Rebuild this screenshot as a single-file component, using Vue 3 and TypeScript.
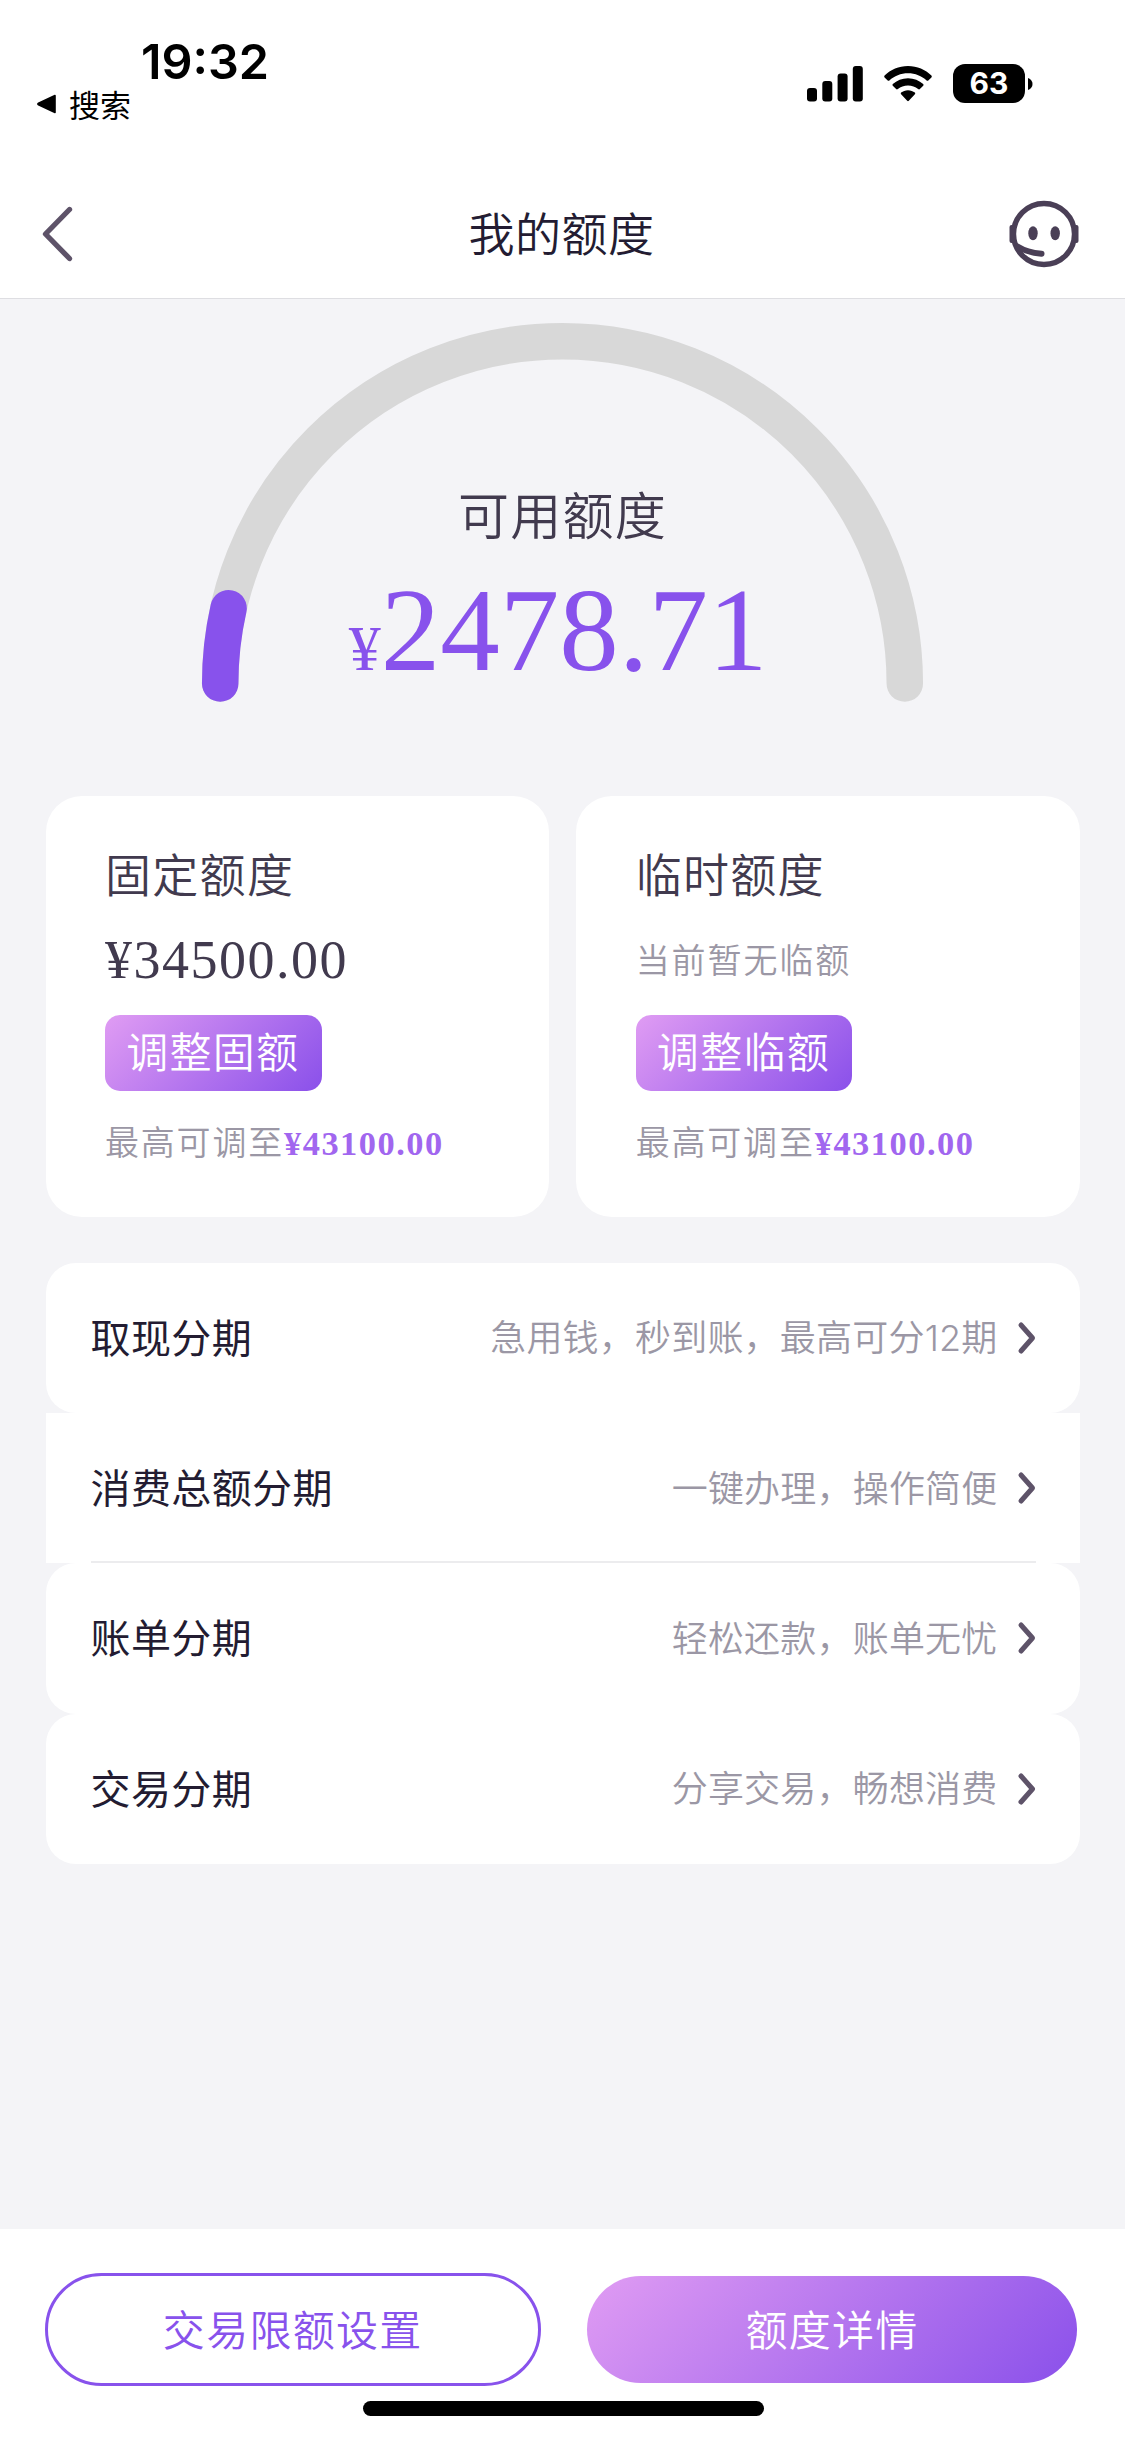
<script setup lang="ts">
interface QuotaCard {
  title: string
  amount?: string
  empty?: string
  action: string
  max: string
}

interface InstallmentRow {
  label: string
  hint: string
  digits?: string
  tail?: string
  square?: boolean
}

const cards: QuotaCard[] = [
  { title: '固定额度', amount: '¥34500.00', action: '调整固额', max: '¥43100.00' },
  { title: '临时额度', empty: '当前暂无临额', action: '调整临额', max: '¥43100.00' },
]

const rows: InstallmentRow[] = [
  { label: '取现分期', hint: '急用钱，秒到账，最高可分', digits: '12', tail: '期' },
  { label: '消费总额分期', hint: '一键办理，操作简便', square: true },
  { label: '账单分期', hint: '轻松还款，账单无忧' },
  { label: '交易分期', hint: '分享交易，畅想消费' },
]

// Half-circle gauge: centre and radius in svg units, progress as an angle from the left end.
const cx = 562.5
const cy = 385.5
const r = 342.3
const angle = (12.7 * Math.PI) / 180
const track = `M${cx - r} ${cy}A${r} ${r} 0 0 1 ${cx + r} ${cy}`
const progress = `M${cx - r} ${cy}A${r} ${r} 0 0 1 ${cx - r * Math.cos(angle)} ${cy - r * Math.sin(angle)}`
</script>

<template>
  <div class="screen">
    <header class="top">
      <div class="status">
        <div class="status-left">
          <div class="time">19:32</div>
          <div class="back-app">
            <svg width="20" height="20" viewBox="0 0 20 20">
              <path d="M19 1.5V18.5L2.500 10.8Q1.200 10 2.500 9.2Z" stroke="#000" stroke-width="1.6" stroke-linejoin="round" />
            </svg>
            <span>搜索</span>
          </div>
        </div>
        <div class="status-icons">
          <svg class="signal" width="56" height="36" viewBox="0 0 56 36">
            <rect x="0" y="22" width="10" height="13.5" rx="3" />
            <rect x="15.3" y="15" width="10" height="20.5" rx="3" />
            <rect x="30.6" y="7.5" width="10" height="28" rx="3" />
            <rect x="45.8" y="0" width="10" height="35.5" rx="3" />
          </svg>
          <svg class="wifi" width="48" height="36" viewBox="0 0 48 36">
            <path d="M24 0C33.2 0 41.5 3.7 47.4 9.6Q48.2 10.5 47.4 11.4L44.3 14.5Q43.5 15.2 42.6 14.5C37.700 10 31.200 7.300 24 7.300S10.300 10 5.400 14.500Q4.500 15.200 3.700 14.500L.6 11.400Q-.2 10.500 .6 9.600C6.500 3.700 14.800 0 24 0Z" />
            <path d="M24 12.200C29.900 12.200 35.200 14.400 39.200 18Q40 18.900 39.200 19.800L35.900 23Q35.100 23.800 34.100 23C31.400 20.700 27.900 19.500 24 19.500S16.600 20.700 13.900 23Q12.900 23.800 12.100 23L8.800 19.800Q8 18.900 8.800 18C12.800 14.400 18.100 12.200 24 12.200Z" />
            <path d="M24 24.200C26.700 24.200 29 25.100 30.900 26.600Q31.700 27.400 30.900 28.200L24.800 34.800Q24 35.600 23.200 34.800L17.100 28.200Q16.300 27.400 17.100 26.600C19 25.100 21.300 24.200 24 24.200Z" />
          </svg>
          <div class="battery">63</div>
          <svg class="nub" width="5" height="12" viewBox="0 0 5 12">
            <path d="M0 0Q4.500 1.800 4.500 6T0 12Z" />
          </svg>
        </div>
      </div>
      <nav class="nav">
        <svg class="nav-back" width="34" height="58" viewBox="0 0 34 58">
          <path d="M28.500 4.500L4.500 29L28.500 53.500" fill="none" stroke="#5e5369" stroke-width="5.300" stroke-linecap="round" stroke-linejoin="round" />
        </svg>
        <h1>我的额度</h1>
        <svg class="service" width="72" height="72" viewBox="0 0 72 72">
          <circle cx="36" cy="36" r="30.500" fill="none" stroke="#4a3f56" stroke-width="5.400" />
          <path d="M6.500 27H3.500Q1.500 27 1.500 29V43Q1.500 45 3.500 45H6.500ZM65.500 27H68.500Q70.500 27 70.500 29V43Q70.500 45 68.500 45H65.500Z" fill="#4a3f56" />
          <ellipse cx="25" cy="35.300" rx="4.700" ry="7" fill="#4a3f56" />
          <ellipse cx="47.200" cy="35.300" rx="4.700" ry="7" fill="#4a3f56" />
          <path d="M9.500 48.500Q19 54.500 33.500 55.700" fill="none" stroke="#4a3f56" stroke-width="6" stroke-linecap="round" />
        </svg>
      </nav>
    </header>

    <main>
      <section class="gauge">
        <svg class="gauge-arc" width="1125" height="420" viewBox="0 0 1125 420" fill="none" stroke-width="36.500" stroke-linecap="round">
          <path :d="track" stroke="#d8d8d8" />
          <path :d="progress" stroke="#8852ec" />
        </svg>
        <div class="gauge-label">可用额度</div>
        <div class="gauge-amount"><small>¥</small>2478.71</div>
      </section>

      <section class="cards">
        <article v-for="card in cards" :key="card.title" class="card">
          <h2>{{ card.title }}</h2>
          <p v-if="card.amount" class="amount">{{ card.amount }}</p>
          <p v-else class="empty">{{ card.empty }}</p>
          <button class="adjust">{{ card.action }}</button>
          <p class="max">最高可调至<b>{{ card.max }}</b></p>
        </article>
      </section>

      <section class="list">
        <div v-for="row in rows" :key="row.label" class="row" :class="{ square: row.square }">
          <div class="row-inner">
            <span class="label">{{ row.label }}</span>
            <span class="hint">{{ row.hint }}<span v-if="row.digits" class="digits">{{ row.digits }}</span>{{ row.tail }}</span>
            <svg class="go" width="20" height="34" viewBox="0 0 20 34">
              <path d="M4 4L15.500 17L4 30" fill="none" stroke="#5e5369" stroke-width="5" stroke-linecap="round" stroke-linejoin="round" />
            </svg>
          </div>
        </div>
      </section>
    </main>

    <footer class="bottom">
      <div class="actions">
        <button class="outline">交易限额设置</button>
        <button class="filled">额度详情</button>
      </div>
      <div class="home"></div>
    </footer>
  </div>
</template>

<style>
body {
  margin: 0;
}
</style>

<style scoped>
.screen {
  display: flex;
  flex-direction: column;
  width: 1125px;
  height: 2439px;
  overflow: hidden;
  background: #f4f4f7;
  color: #413a4e;
  font-family: "Noto Sans CJK SC", sans-serif;
  font-weight: 350;
}
h1, h2, p {
  margin: 0;
  font-weight: inherit;
}
button {
  display: flex;
  align-items: center;
  justify-content: center;
  box-sizing: border-box;
  margin: 0;
  border: 0;
  font: inherit;
  font-size: 42px;
  letter-spacing: 1.3px;
}
svg {
  display: block;
  flex: none;
}
.top {
  box-sizing: border-box;
  height: 299px;
  background: #fff;
  border-bottom: 1.500px solid #dedee2;
}
.status {
  display: flex;
  justify-content: space-between;
  height: 170px;
  color: #000;
}
.status-left {
  padding: 37px 0 0 36px;
}
.time {
  padding-left: 105px;
  font: 600 48.500px/50px Inter, sans-serif;
}
.back-app {
  display: flex;
  align-items: center;
  gap: 13px;
  font-size: 31px;
  line-height: 34px;
  font-weight: 400;
}
.status-icons {
  display: flex;
  align-items: flex-start;
  padding: 64px 92px 0 0;
}
.signal {
  margin-top: 2px;
}
.wifi {
  margin: 2px 21px 0;
}
.battery {
  width: 72px;
  height: 39px;
  border-radius: 12px;
  background: #000;
  color: #fff;
  font: 700 30px/39px Inter, sans-serif;
  text-align: center;
}
.nub {
  margin: 14px 0 0 3px;
}
.nav {
  display: flex;
  align-items: center;
  justify-content: space-between;
  height: 128px;
  padding: 0 45px 0 41px;
}
.nav h1 {
  color: #231c32;
  font-size: 46px;
  line-height: 60px;
  letter-spacing: .500px;
  margin: 0 0 7px 40px;
}
.gauge {
  position: relative;
  box-sizing: border-box;
  height: 496.500px;
  padding-top: 179px;
  text-align: center;
}
.gauge-arc {
  position: absolute;
  left: 0;
  top: -1px;
}
.gauge-label {
  position: relative;
  font-size: 51px;
  line-height: 70px;
  letter-spacing: 1.300px;
}
.gauge-amount {
  position: relative;
  margin-top: 17px;
  padding-right: 9px;
  color: #8852ec;
  font: 400 119px/130px "Liberation Serif", serif;
}
.gauge-amount small {
  font-size: 64px;
}
.cards {
  display: flex;
  justify-content: space-between;
  padding: 0 45px 0 45.500px;
}
.card {
  box-sizing: border-box;
  width: 503.800px;
  height: 421.500px;
  padding: 47px 0 0 59.500px;
  border-radius: 36px;
  background: #fff;
}
.card h2 {
  font-size: 46px;
  line-height: 59px;
  padding-bottom: 1px;
  letter-spacing: 1.300px;
}
.amount,
.empty {
  height: 60px;
  margin-top: 27.500px;
}
.amount {
  font: 400 54px/60px "Liberation Serif", serif;
  letter-spacing: 1.500px;
}
.empty {
  color: #9b97a5;
  font-size: 34px;
  line-height: 58px;
  letter-spacing: 1.900px;
}
.adjust {
  width: 216.500px;
  height: 75.500px;
  margin-top: 25px;
  padding: 0 1px 6px 0;
  border-radius: 15px;
  background: linear-gradient(135deg, #e09cf3, #8a50ea);
  color: #fff;
}
.max {
  display: flex;
  margin-top: 25.500px;
  color: #9b97a5;
  font-size: 34px;
  line-height: 50px;
  letter-spacing: 1.800px;
}
.max b {
  color: #a166ef;
  font: 700 34.400px/54px "Liberation Serif", serif;
  letter-spacing: 1.500px;
}
.list {
  margin: 45.500px 45px 0 45.500px;
}
.row {
  height: 150.400px;
  border-radius: 30px;
  background: #fff;
}
.row.square {
  border-radius: 0;
}
.row-inner {
  display: flex;
  align-items: center;
  box-sizing: border-box;
  height: 100%;
  margin: 0 44px 0 45px;
  padding-top: 2px;
  border-bottom: 2px solid transparent;
}
.row.square .row-inner {
  border-bottom-color: #ececee;
}
.label {
  flex: 1;
  padding-bottom: 4px;
  color: #231c32;
  font-size: 40px;
  font-weight: 400;
  letter-spacing: .400px;
}
.hint {
  margin-right: 19px;
  padding-bottom: 5px;
  color: #9b97a5;
  font-size: 36px;
  letter-spacing: .200px;
}
.digits {
  font-family: Inter, sans-serif;
  font-size: 36px;
  line-height: 1;
  letter-spacing: .200px;
}
.go {
  margin-right: -.500px;
}
.bottom {
  box-sizing: border-box;
  height: 210px;
  margin-top: auto;
  padding: 44px 48px 0 45px;
  background: #fff;
}
.actions {
  display: flex;
  align-items: center;
  justify-content: space-between;
  height: 113px;
}
.outline {
  width: 495.500px;
  height: 113px;
  padding: 0 0 4px;
  border: 3px solid #8852ec;
  border-radius: 57px;
  background: #fff;
  color: #8852ec;
}
.filled {
  width: 490px;
  height: 107px;
  padding: 0 0 4px;
  border-radius: 54px;
  background: linear-gradient(135deg, #e09cf3, #8a50ea);
  color: #fff;
}
.home {
  width: 401px;
  height: 15px;
  margin: 15px 0 0 317.500px;
  border-radius: 8px;
  background: #000;
}
</style>
